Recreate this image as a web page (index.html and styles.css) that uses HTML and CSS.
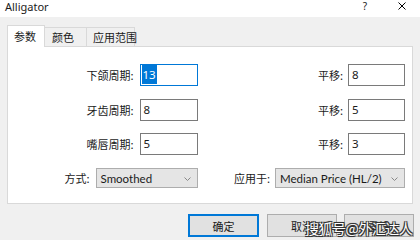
FILE: index.html
```html
<!DOCTYPE html>
<html>
<head>
<meta charset="utf-8">
<link rel="stylesheet" href="styles.css">
</head>
<body>
<div class="win">
  <div class="titlebar">
    <span class="title">Alligator</span>
    <span class="help">?</span>
    <svg class="close" width="8" height="8" viewBox="0 0 8 8"><path d="M0.5 0.5L7.5 7.5M7.5 0.5L0.5 7.5" stroke="#000" stroke-width="1"/></svg>
  </div>
  <div class="content">
    <div class="tabs">
      <div class="tab active">参数</div>
      <div class="tab t2">颜色</div>
      <div class="tab t3">应用范围</div>
    </div>
    <div class="panel">
      <div class="row">
        <div class="half left"><span class="lbl">下颌周期:</span><div class="inp focus"><span class="sel">13</span></div></div>
        <div class="half right"><span class="lbl">平移:</span><div class="inp">8</div></div>
      </div>
      <div class="row">
        <div class="half left"><span class="lbl">牙齿周期:</span><div class="inp">8</div></div>
        <div class="half right"><span class="lbl">平移:</span><div class="inp">5</div></div>
      </div>
      <div class="row">
        <div class="half left"><span class="lbl">嘴唇周期:</span><div class="inp">5</div></div>
        <div class="half right"><span class="lbl">平移:</span><div class="inp">3</div></div>
      </div>
      <div class="row selrow">
        <div class="half left"><span class="lbl">方式:</span><div class="combo small"><span>Smoothed</span><svg width="7" height="4" viewBox="0 0 7 4"><path d="M0.5 0.5L3.5 3.5L6.5 0.5" fill="none" stroke="#888" stroke-width="1"/></svg></div></div>
        <div class="half right"><span class="lbl">应用于:</span><div class="combo big"><span>Median Price (HL/2)</span><svg width="7" height="4" viewBox="0 0 7 4"><path d="M0.5 0.5L3.5 3.5L6.5 0.5" fill="none" stroke="#888" stroke-width="1"/></svg></div></div>
      </div>
    </div>
    <div class="buttons">
      <div class="btn default">确定</div>
      <div class="btn">取消</div>
      <div class="btn">重设</div>
    </div>
  </div>
  <div class="watermark">搜狐号@外汇达人</div>
</div>
</body>
</html>
```
FILE: styles.css
```css
* { box-sizing: border-box; }
html, body { margin: 0; padding: 0; }
body {
  width: 420px;
  height: 240px;
  overflow: hidden;
  background: #f0f0f0;
  font-family: "Noto Sans CJK SC", sans-serif;
  font-size: 11px;
  color: #1a1a1a;
}
.win { position: relative; width: 420px; height: 240px; }
.titlebar {
  height: 17px;
  background: #fff;
  display: flex;
  align-items: center;
  padding-left: 5px;
}
.title { font-family: "Noto Sans", sans-serif; font-size: 11px; line-height: 12px; margin-top: -4px; }
.help { margin-left: auto; font-family: "Noto Sans", sans-serif; font-size: 10px; margin-top: -6px; }
.close { margin-left: 31px; margin-right: 14px; margin-top: -6px; }
.content { padding: 8px 6px 0 7px; }
.tabs { display: flex; align-items: flex-end; height: 21px; }
.tab {
  white-space: nowrap;
  font-size: 11px;
  height: 19px;
  line-height: 18px;
  border: 1px solid #d9d9d9;
  border-bottom: none;
  background: #f0f0f0;
  margin-left: -1px;
}
.tab.t2 { width: 43px; padding-left: 7px; }
.tab.t3 { width: 49px; padding-left: 6px; }
.tab.active {
  width: 38px;
  height: 22px;
  line-height: 20px;
  background: #fff;
  margin-left: 0;
  margin-bottom: -1px;
  position: relative;
  z-index: 1;
  padding-left: 6px;
}
.panel {
  width: 406px;
  height: 158px;
  background: #fff;
  border: 1px solid #d9d9d9;
  padding: 17px 7px 0 0;
}
.row { display: flex; height: 22px; margin-bottom: 13px; }
.row:nth-child(2) { margin-bottom: 12px; }
.row.selrow { height: 20px; margin-top: 1px; }
.half { display: flex; justify-content: flex-end; align-items: center; }
.left { width: 190px; }
.right { width: 208px; }
.lbl { font-size: 11px; margin-right: 6px; }
.right .lbl { margin-right: 5px; }
.inp {
  width: 58px;
  height: 22px;
  border: 1px solid #7a7a7a;
  font-family: "Noto Sans", sans-serif;
  font-size: 11.5px;
  line-height: 20px;
  padding-left: 3px;
  background: #fff;
}
.right .inp { width: 57px; }
.inp.focus { border-color: #0078d7; padding-left: 1px; }
.sel { background: #0078d7; color: #fff; padding: 2px 1px; }
.combo {
  height: 20px;
  border: 1px solid #adadad;
  background: #e5e5e5;
  display: flex;
  align-items: center;
  justify-content: space-between;
  padding: 0 6px 0 4px;
  font-family: "Lato", sans-serif;
  font-size: 11.5px;
}
.combo.small { width: 102px; }
.combo.big { width: 130px; }
.combo svg { margin-top: 1px; }
.buttons { display: flex; justify-content: flex-end; margin-top: 10px; }
.btn {
  width: 70px;
  height: 23px;
  border: 1px solid #adadad;
  background: #e1e1e1;
  font-size: 11px;
  display: flex;
  align-items: center;
  justify-content: center;
  margin-left: 7px;
}
.btn.default { width: 71px; border: 2px solid #0078d7; margin-left: 0; }
.btn:nth-child(2) { margin-left: 8px; }
.watermark {
  position: absolute;
  left: 305px;
  top: 220px;
  font-size: 14px;
  line-height: 17px;
  letter-spacing: -0.5px;
  color: #fff;
  text-shadow: -1px -1px 0 #333, 1px -1px 0 #333, -1px 1px 0 #333, 1px 1px 0 #333, 0 0 2px #000;
}
```
